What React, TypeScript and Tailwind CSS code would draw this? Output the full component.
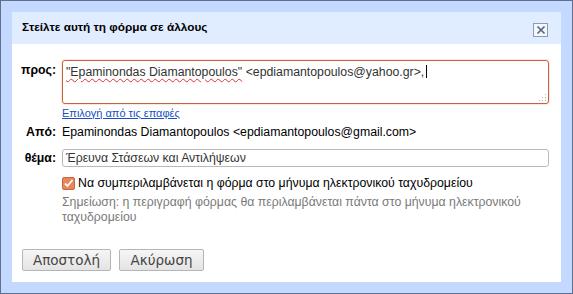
export default function App() {
  return (
    <div className="w-[573px] h-[294px] border border-[#5f6f8c] bg-[#c3d9ff] p-[11px] font-['Liberation_Sans',Arial,sans-serif] text-[12.3px] text-[#222]">
      <div className="flex h-full flex-col bg-white">
        {/* Header */}
        <div className="flex h-[32px] items-center justify-between bg-[#e0ecff] pl-[10px] pr-[13px]">
          <span className="font-bold text-[11.8px] text-black">Στείλτε αυτή τη φόρμα σε άλλους</span>
          <button className="mt-[3px] flex h-[14px] w-[15px] items-center justify-center border border-[#8c9bb3] bg-[#f3f6fb]">
            <svg width="10" height="10" viewBox="0 0 10 10">
              <path d="M1.5 1.5 L8.5 8.5 M8.5 1.5 L1.5 8.5" stroke="#5a6780" strokeWidth="1.7" />
            </svg>
          </button>
        </div>

        {/* Body */}
        <div className="flex flex-1 flex-col pt-[16px]">
          <div className="flex">
            <div className="w-[44px] pt-[1px] text-right font-bold text-black">προς:</div>
            <div className="ml-[6px] w-[487px]">
              <div className="relative h-[44px] rounded-[3px] border border-[#c5643c] px-[3px] pt-[2px] leading-[16px] text-[#333] shadow-[0_0_2px_#e9a98d]">
                <span className="underline decoration-wavy decoration-[#e03030] decoration-1 underline-offset-2">"Epaminondas Diamantopoulos"</span>{' '}
                &lt;epdiamantopoulos@yahoo.gr&gt;,
                <span className="ml-[2px] inline-block h-[13px] w-px translate-y-[2px] bg-black" />
                <svg className="absolute bottom-[1px] right-[1px]" width="9" height="9" viewBox="0 0 9 9">
                  <g fill="#b5b5b5">
                    <rect x="7" y="1" width="1" height="1" />
                    <rect x="7" y="4" width="1" height="1" />
                    <rect x="7" y="7" width="1" height="1" />
                    <rect x="4" y="4" width="1" height="1" />
                    <rect x="4" y="7" width="1" height="1" />
                    <rect x="1" y="7" width="1" height="1" />
                  </g>
                </svg>
              </div>
              <a className="mt-[2px] block text-[11px] leading-[14px] text-[#1a4fc0] underline">Επιλογή από τις επαφές</a>
            </div>
          </div>

          <div className="mt-[4px] flex leading-[16px]">
            <div className="w-[44px] text-right font-bold text-black">Από:</div>
            <div className="ml-[6px] text-black">Epaminondas Diamantopoulos &lt;epdiamantopoulos@gmail.com&gt;</div>
          </div>

          <div className="mt-[9px] flex items-center">
            <div className="w-[44px] text-right font-bold text-black">θέμα:</div>
            <div className="ml-[6px] flex h-[18px] w-[487px] items-center rounded-[3px] border border-[#b9b9b9] px-[3px] text-[#333]">
              Έρευνα Στάσεων και Αντιλήψεων
            </div>
          </div>

          <div className="ml-[50px] mt-[8px] flex items-center leading-[16px]">
            <span className="flex h-[13px] w-[13px] items-center justify-center rounded-[2px] border border-[#c9683f] bg-[#e8875a]">
              <svg width="11" height="11" viewBox="0 0 11 11">
                <path d="M2 5.5 L4.5 8 L9.5 2" fill="none" stroke="#fff" strokeWidth="1.8" />
              </svg>
            </span>
            <span className="ml-[3px] text-black">Να συμπεριλαμβάνεται η φόρμα στο μήνυμα ηλεκτρονικού ταχυδρομείου</span>
          </div>

          <div className="ml-[50px] mt-[4px] w-[480px] leading-[15px] text-[#7a7a7a]">
            Σημείωση: η περιγραφή φόρμας θα περιλαμβάνεται πάντα στο μήνυμα ηλεκτρονικού ταχυδρομείου
          </div>

          <div className="ml-[10px] mt-[24px] flex gap-[8px] font-['DejaVu_Sans',sans-serif] text-[13.5px]">
            <button className="h-[22px] w-[89px] rounded-[2px] border border-[#b5b5b5] bg-gradient-to-b from-[#f6f6f6] to-[#e4e4e4] text-[#444]">
              Αποστολή
            </button>
            <button className="h-[22px] w-[85px] rounded-[2px] border border-[#b5b5b5] bg-gradient-to-b from-[#f6f6f6] to-[#e4e4e4] text-[#444]">
              Ακύρωση
            </button>
          </div>
        </div>
      </div>
    </div>
  );
}
